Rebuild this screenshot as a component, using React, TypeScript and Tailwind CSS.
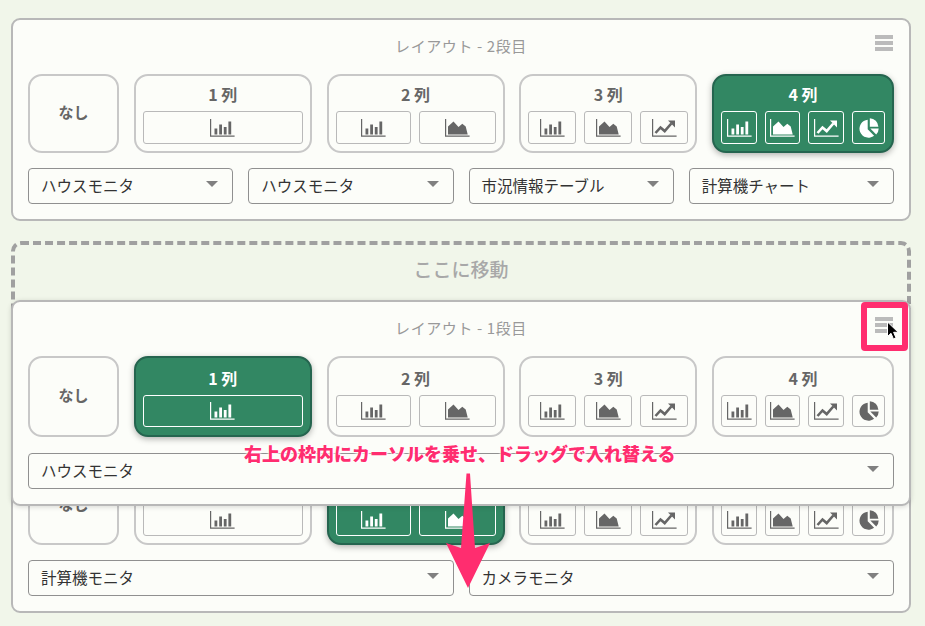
import React from "react";

const FONT = '"Noto Sans CJK JP", "Noto Sans", sans-serif';

function Axis() {
  return <path d="M0.6 0v17.2h24" fill="none" stroke="currentColor" strokeWidth="1.2" />;
}
function BarIcon() {
  return (
    <svg width="25" height="18" viewBox="0 0 25 18" className="block">
      <Axis />
      <path d="M4.5 9.5h2.8v6h-2.8zM9.2 5.5h2.8v10h-2.8zM13.8 8h2.8v7.5h-2.8zM18.4 2.5h2.8v13h-2.8z" fill="currentColor" />
    </svg>
  );
}
function AreaIcon() {
  return (
    <svg width="25" height="18" viewBox="0 0 25 18" className="block">
      <Axis />
      <path d="M3 15.6V7.5L8.5 2.5l5 5.5 3.8-3.2 3.4 2.7 2 8.1z" fill="currentColor" />
    </svg>
  );
}
function LineIcon() {
  return (
    <svg width="25" height="18" viewBox="0 0 25 18" className="block">
      <Axis />
      <path d="M3.5 14l5-5.5 4.2 3.6 6.6-7.6" fill="none" stroke="currentColor" strokeWidth="2.6" />
      <path d="M16 1.5h7v7z" fill="currentColor" />
    </svg>
  );
}
function PieIcon() {
  return (
    <svg width="20" height="20" viewBox="0 0 20 20" className="block">
      <path d="M8.7 1.7v9.5l6.4 6.5A9 9 0 1 1 8.7 1.7z" fill="currentColor" />
      <path d="M10.8 0.2a9 9 0 0 1 8.6 8.6h-8.6z" fill="currentColor" />
      <path d="M11.3 10.6h8.4a9 9 0 0 1-2.5 6z" fill="currentColor" />
    </svg>
  );
}

const ICONS = [BarIcon, AreaIcon, LineIcon, PieIcon];

function Caret() {
  return (
    <svg width="12" height="6" viewBox="0 0 12 6" className="mb-[4px] block shrink-0">
      <path d="M0 0h12L6 6z" fill="#808080" />
    </svg>
  );
}

function Hamburger() {
  return (
    <div className="absolute right-[16px] top-[15px] flex w-[18px] flex-col gap-[2px]">
      <div className="h-[4px] bg-[#bbbbbb]" />
      <div className="h-[4px] bg-[#bbbbbb]" />
      <div className="h-[4px] bg-[#bbbbbb]" />
    </div>
  );
}

const WIDTHS: string[][] = [
  ["w-full"],
  ["w-[75px]", "w-[77px]"],
  ["w-[48px]", "w-[48px]", "w-[48px]"],
  ["w-[36px]", "w-[35px]", "w-[36px]", "w-[33px]"],
];

function ColumnButton({ cols, active, tall }: { cols: number; active: boolean; tall: boolean }) {
  return (
    <div
      className={`flex flex-col items-stretch rounded-[14px] border-2 px-[7px] ${
        cols === 4 ? "w-[182px]" : "w-[178px]"
      } ${tall ? "pb-[8px] pt-[10px]" : "pb-[7px] pt-[8px]"} ${
        active
          ? "border-[#25654f] bg-[#328763] text-white shadow-[0_2px_6px_rgba(0,0,0,0.3)]"
          : "border-[#c8c8c8] text-[#666666]"
      }`}
    >
      <div className="h-[20px] text-center text-[16px] font-bold leading-[20px]">{cols} 列</div>
      <div className={`mt-auto flex justify-between ${tall ? "h-[32px]" : "h-[33px]"}`}>
        {WIDTHS[cols - 1].map((w, i) => {
          const Icon = ICONS[i];
          return (
            <div
              key={i}
              className={`flex items-center justify-center rounded-[3px] border ${w} ${
                active ? "border-white" : "border-[#b9b9b9]"
              }`}
            >
              <Icon />
            </div>
          );
        })}
      </div>
    </div>
  );
}

function Select({ label }: { label: string }) {
  return (
    <div className="flex h-[36px] flex-1 items-center justify-between rounded-[4px] border border-[#909090] pl-[12px] pr-[14px] text-[15.5px] text-[#333333]">
      <span className="pb-[1px]">{label}</span>
      <Caret />
    </div>
  );
}

function Card({
  title,
  active,
  selects,
  tall = false,
}: {
  title: string;
  active: number;
  selects: string[];
  tall?: boolean;
}) {
  return (
    <div
      className={`relative w-[900px] rounded-[9px] border-2 border-[#b8b8b8] bg-[#fcfdf9] px-[15px] ${
        tall ? "h-[206px] shadow-[0_1px_5px_rgba(0,0,0,0.15)]" : "h-[203px]"
      }`}
    >
      <Hamburger />
      <div className="flex h-[54px] items-start justify-center pt-[15px] text-[15px] leading-[22px] tracking-[0.6px] text-[#999999]">
        {title}
      </div>
      <div className={`flex justify-between ${tall ? "h-[81px]" : "h-[79px]"}`}>
        <div
          className={`flex w-[91px] items-center justify-center rounded-[14px] border-2 pb-[2px] text-[15px] font-bold ${
            active === 0 ? "border-[#25654f] bg-[#328763] text-white" : "border-[#c8c8c8] text-[#666666]"
          }`}
        >
          なし
        </div>
        {[1, 2, 3, 4].map((c) => (
          <ColumnButton key={c} cols={c} active={active === c} tall={tall} />
        ))}
      </div>
      <div className={`flex gap-[15px] ${tall ? "mt-[16px]" : "mt-[15px]"}`}>
        {selects.map((s, i) => (
          <Select key={i} label={s} />
        ))}
      </div>
    </div>
  );
}

function Arrow() {
  return (
    <svg width="50" height="120" viewBox="0 0 50 120" className="absolute left-[443px] top-[471px]">
      <path d="M23.5 2.5h3.5L32 77l15 -5L25 117 3 72l15 5z" fill="#ff2d6f" />
    </svg>
  );
}

function Cursor() {
  return (
    <svg width="14" height="20" viewBox="0 0 14 20" className="absolute left-[886px] top-[321px]">
      <path
        d="M1.5 1v14.5l3.5-3.2 2.4 5.6 2.6-1.1-2.4-5.5h4.6z"
        fill="#000000"
        stroke="#ffffff"
        strokeWidth="1"
      />
    </svg>
  );
}

export default function App() {
  return (
    <div
      className="relative h-[626px] w-[925px] overflow-hidden bg-[#f1f6ea] pl-[11px] pt-[18px]"
      style={{ fontFamily: FONT }}
    >
      <Card
        title="レイアウト - 2段目"
        active={4}
        selects={["ハウスモニタ", "ハウスモニタ", "市況情報テーブル", "計算機チャート"]}
      />
      <div className="mt-[20px] flex h-[149px] w-[900px] items-start justify-center rounded-[10px] border-[4px] border-dashed border-[#a0a0a0] pt-[11px] text-[19px] font-medium leading-[26px] text-[#a8a8a8]">
        ここに移動
      </div>
      <div className="mt-[20px]">
        <Card title="レイアウト - 3段目" active={2} selects={["計算機モニタ", "カメラモニタ"]} />
      </div>

      <div className="absolute left-[11px] top-[300px]">
        <Card title="レイアウト - 1段目" active={1} selects={["ハウスモニタ"]} tall />
      </div>

      <div className="absolute left-[861px] top-[302px] h-[49px] w-[47px] rounded-[4px] border-[6px] border-[#ff2d6f]" />
      <Cursor />
      <div
        className="absolute left-[244px] top-[440px] whitespace-nowrap text-[18px] font-black leading-[26px] text-[#ff2d6f]"
        style={{ textShadow: "0 0 2px #fff, 0 0 3px #fff, 1px 1px 2px #fff" }}
      >
        右上の枠内にカーソルを乗せ、ドラッグで入れ替える
      </div>
      <Arrow />
    </div>
  );
}
